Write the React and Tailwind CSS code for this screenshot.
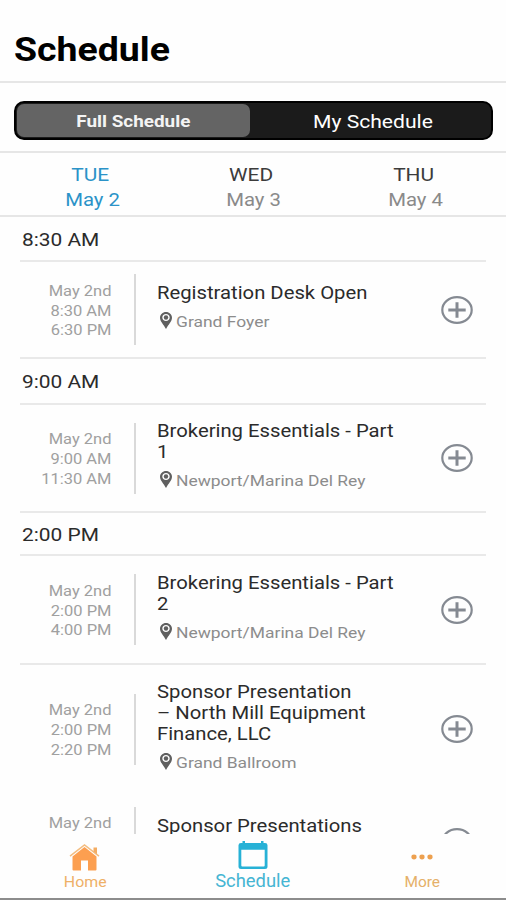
import React, { useState } from "react";

const days = [
  { day: "TUE", date: "May 2" },
  { day: "WED", date: "May 3" },
  { day: "THU", date: "May 4" },
];

const sections = [
  {
    time: "8:30 AM",
    height: "h-[45px] pt-[11px]",
    events: [
      {
        start: "8:30 AM",
        end: "6:30 PM",
        title: "Registration Desk Open",
        place: "Grand Foyer",
        box: "h-[97px] border-b-2",
        pad: "pt-[20px]",
        gap: "mt-[9px]",
      },
    ],
  },
  {
    time: "9:00 AM",
    height: "h-[46px] pt-[11px]",
    events: [
      {
        start: "9:00 AM",
        end: "11:30 AM",
        title: "Brokering Essentials - Part\n1",
        place: "Newport/Marina Del Rey",
        box: "h-[108px] border-b-2",
        pad: "pt-[15px]",
        gap: "mt-[9px]",
      },
    ],
  },
  {
    time: "2:00 PM",
    height: "h-[43px] pt-[10px]",
    events: [
      {
        start: "2:00 PM",
        end: "4:00 PM",
        title: "Brokering Essentials - Part\n2",
        place: "Newport/Marina Del Rey",
        box: "h-[109px] border-b-2",
        pad: "pt-[16px]",
        gap: "mt-[9px]",
      },
      {
        start: "2:00 PM",
        end: "2:20 PM",
        title: "Sponsor Presentation\n– North Mill Equipment\nFinance, LLC",
        place: "Grand Ballroom",
        box: "h-[128px]",
        pad: "pt-[16px]",
        gap: "mt-[9px]",
      },
      {
        title: "Sponsor Presentations",
        box: "h-[98px]",
        pad: "pt-[22px]",
      },
    ],
  },
];

const PinIcon = () => (
  <svg width="12" height="17" viewBox="0 0 12 17" className="shrink-0">
    <path
      fillRule="evenodd"
      fill="#5f5f5f"
      d="M6 0C2.700 0 0 2.500 0 5.700 0 9.300 3.600 12.400 6 17c2.400-4.600 6-7.700 6-11.300C12 2.500 9.300 0 6 0Zm0 2c2.100 0 3.700 1.500 3.700 3.500S8.100 9 6 9 2.300 7.500 2.300 5.500 3.900 2 6 2Z"
    />
    <circle cx="6" cy="5.500" r="2.200" fill="#5f5f5f" />
  </svg>
);

const AddIcon = () => (
  <svg width="32" height="28" viewBox="0 0 32 28">
    <ellipse cx="16" cy="14" rx="14.700" ry="12.800" fill="none" stroke="#858a92" strokeWidth="2.200" />
    <path d="M16 6.200v15.600M7.300 14h17.400" stroke="#858a92" strokeWidth="3" />
  </svg>
);

const HomeIcon = () => (
  <svg width="31" height="27" viewBox="0 0 31 27">
    <path d="M3.500 12.500 15.500 3 27.500 12.500V25.500q0 1-1 1H19V16.500h-7v10H4.500q-1 0-1-1Z" fill="#fc9f50" />
    <path d="M1 12.200 15.500 1 30 12.200" fill="none" stroke="#f3bd80" strokeWidth="1.500" />
    <path d="M24.500 3.500h3.500v6.800l-3.500-2.700Z" fill="#f3ac62" />
  </svg>
);

const CalendarIcon = () => (
  <svg width="30" height="28" viewBox="0 0 30 28">
    <path
      fillRule="evenodd"
      fill="#27b1d6"
      d="M4.500 0h2.500v2h16V0h2.500v2H27q2.500 0 2.500 2.300v21.200Q29.500 28 27 28H3Q.5 28 .5 25.500V4.300Q.5 2 3 2h1.500ZM3.300 8.800v15.600q0 1 1 1h21.400q1 0 1-1V8.800Z"
    />
  </svg>
);

const DotsIcon = () => (
  <svg width="22" height="6" viewBox="0 0 22 6" fill="#eda04f">
    <ellipse cx="3" cy="3" rx="2.600" ry="2.400" />
    <ellipse cx="11" cy="3" rx="2.600" ry="2.400" />
    <ellipse cx="19" cy="3" rx="2.600" ry="2.400" />
  </svg>
);

const EventRow = ({ event }) => (
  <div className={`mx-5 flex items-start border-[#e9e9e9] ${event.box}`}>
    <div className="flex h-full w-[91.500px] shrink-0 origin-right scale-x-[1.100] flex-col justify-center pt-[4px] text-right text-[15px] leading-[19.700px] text-[#a0a0a0]">
      <span>May 2nd</span>
      <span className="min-h-[19.700px]">{event.start}</span>
      <span className="min-h-[19.700px]">{event.end}</span>
    </div>
    <div className="ml-[22.500px] flex h-full items-center">
      <div className="h-[71px] w-[2px] bg-[#d9d9d9]" />
    </div>
    <div className={`ml-[21px] flex-1 ${event.pad}`}>
      <h3 className="origin-left scale-x-[1.125] whitespace-pre text-[18px] leading-[21px] text-[#2b2b2b]">
        {event.title}
      </h3>
      {event.place && (
        <div className={`flex items-start pl-[3px] ${event.gap}`}>
          <PinIcon />
          <span className="ml-[4px] origin-left scale-x-[1.125] whitespace-nowrap text-[15.500px] leading-[20px] text-[#8c8c8c]">
            {event.place}
          </span>
        </div>
      )}
    </div>
    <button className="mr-[13px] flex h-full items-center">
      <AddIcon />
    </button>
  </div>
);

const App = () => {
  const [activeDay, setActiveDay] = useState(0);
  const [tab, setTab] = useState("full");

  return (
    <div className="flex h-[900px] w-[506px] flex-col overflow-hidden bg-[#fefefe] font-['Roboto',sans-serif]">
      {/* Header */}
      <header className="h-[83px] shrink-0 border-b-2 border-[#e6e6e6] pl-[14px] pt-[30px]">
        <h1 className="w-fit origin-left scale-x-[1.135] text-[33px] font-bold leading-[39px] text-black">Schedule</h1>
      </header>

      {/* Full / My switch */}
      <div className="h-[70px] shrink-0 border-b-2 border-[#e6e6e6] px-[14px] pt-[18px]">
        <div className="flex h-[39px] w-[479px] rounded-[10px] border-2 border-black bg-[#1b1b1b] p-px text-white">
          <button
            onClick={() => setTab("full")}
            className={`flex w-[233px] items-center justify-center rounded-[7px] pt-[3px] ${tab === "full" ? "bg-[#646464]" : ""}`}
          >
            <span className="scale-x-[1.110] text-[17px] font-bold text-[#f4f4f4]">Full Schedule</span>
          </button>
          <button
            onClick={() => setTab("my")}
            className={`flex flex-1 items-center justify-center rounded-[7px] pl-[6px] pt-[3px] ${tab === "my" ? "bg-[#646464]" : ""}`}
          >
            <span className="scale-x-[1.110] text-[19px]">My Schedule</span>
          </button>
        </div>
      </div>

      {/* Days */}
      <div className="grid h-[64px] shrink-0 grid-cols-3 border-b-2 border-[#e6e6e6] pl-[9px] pr-[12px] pt-[9px]">
        {days.map((d, i) => (
          <button
            key={d.day}
            onClick={() => setActiveDay(i)}
            className={`flex flex-col items-center text-[19px] leading-[25px] ${
              i === activeDay ? "text-[#2b93c8]" : "text-[#8a8a8a]"
            }`}
          >
            <span className={`scale-x-[1.100] ${i === activeDay ? "" : "text-[#3c3c3c]"}`}>{d.day}</span>
            <span className="ml-[5px] scale-x-[1.070]">{d.date}</span>
          </button>
        ))}
      </div>

      {/* Event list */}
      <main className="min-h-0 flex-1 overflow-hidden">
        {sections.map((section) => (
          <section key={section.time}>
            <div className={`mx-5 border-b-2 border-[#e9e9e9] pl-[2px] ${section.height}`}>
              <h2 className="w-fit origin-left scale-x-[1.100] text-[19px] leading-[23px] text-[#2b2b2b]">
                {section.time}
              </h2>
            </div>
            {section.events.map((event) => (
              <EventRow key={event.title} event={event} />
            ))}
          </section>
        ))}
      </main>

      {/* Bottom navigation */}
      <nav className="grid h-[66px] shrink-0 grid-cols-3 border-b-2 border-[#8c8c8c] bg-[#fefefe]">
        <button className="flex flex-col items-center pt-[10px] text-[#eeb067]">
          <HomeIcon />
          <span className="ml-[2px] mt-[2px] scale-x-[1.060] text-[15px] leading-[18px]">Home</span>
        </button>
        <button className="flex flex-col items-center pt-[7px] text-[#45b5d3]">
          <CalendarIcon />
          <span className="mt-[2px] scale-x-[1.050] text-[17.500px] leading-[21px]">Schedule</span>
        </button>
        <button className="flex flex-col items-center pt-[20px] text-[#e5b069]">
          <DotsIcon />
          <span className="ml-[2px] mt-[13px] scale-x-[1.030] text-[15px] leading-[18px]">More</span>
        </button>
      </nav>
    </div>
  );
};

export default App;
